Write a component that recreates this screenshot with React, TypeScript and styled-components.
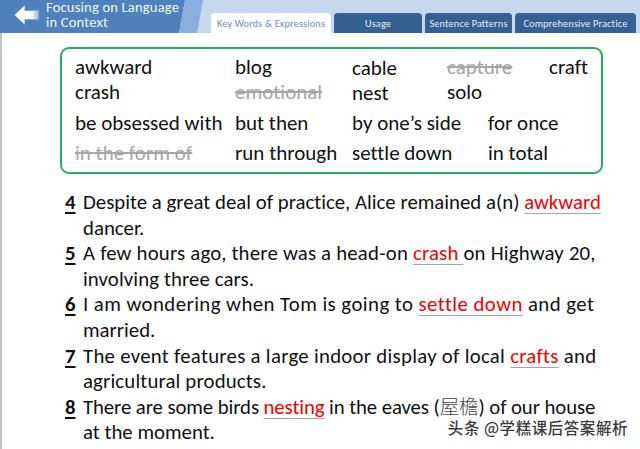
import React from 'react';
import styled, { createGlobalStyle } from 'styled-components';

const GlobalStyle = createGlobalStyle`
  html, body {
    margin: 0;
    padding: 0;
    background: #fff;
  }
`;

const Page = styled.div`
  position: relative;
  width: 640px;
  height: 449px;
  overflow: hidden;
  background: #fff;
  font-family: Carlito, Lato, "Liberation Sans", "Noto Sans CJK SC", sans-serif;
  font-variant-ligatures: none;
  color: #111;
`;

const Header = styled.header`
  display: flex;
  height: 33px;
  background: #c6d8f0;
`;

const TitleBlock = styled.div`
  display: flex;
  align-items: center;
  gap: 7px;
  width: 185px;
  padding: 0 0 4px 14px;
  box-sizing: border-box;
  background: #4f81bd;
  clip-path: polygon(0 0, 100% 0, 179px 100%, 0 100%);
`;

const Title = styled.div`
  color: #f2f6fb;
  font-size: 14.5px;
  line-height: 14.5px;
  letter-spacing: 0.2px;
  white-space: nowrap;
`;

const Stripe = styled.div`
  width: 24px;
  margin-left: -6px;
  background: #8aaede;
  clip-path: polygon(6px 0, 100% 0, 18px 100%, 0 100%);
`;

const Tabs = styled.nav`
  display: flex;
  align-items: flex-end;
  gap: 3px;
  margin-left: 8px;
`;

const Tab = styled.div<{ $width: number; $active?: boolean }>`
  display: flex;
  align-items: center;
  justify-content: center;
  width: ${({ $width }) => $width}px;
  height: 20px;
  border-radius: 4px 4px 0 0;
  font-size: 10.3px;
  letter-spacing: 0.15px;
  white-space: nowrap;
  background: ${({ $active }) => ($active ? '#fff' : '#366092')};
  color: ${({ $active }) => ($active ? '#6d88bd' : '#e6edf6')};
`;

const Body = styled.main`
  height: 416px;
  box-sizing: border-box;
  padding: 14px 0 0 60px;
  border-left: 2px solid #c4c4c4;
`;

const WordBox = styled.section`
  width: 543px;
  height: 127px;
  margin-left: -2px;
  box-sizing: border-box;
  padding: 6px 0 0 13px;
  border: 2px solid #22b05c;
  border-radius: 9px;
`;

const WordRow = styled.div<{ $height: number }>`
  display: flex;
  height: ${({ $height }) => $height}px;
  font-size: 21px;
  line-height: 25px;
  white-space: nowrap;
`;

const Word = styled.span<{ $width?: number; $struck?: boolean; $drop?: number }>`
  display: block;
  width: ${({ $width }) => ($width ? `${$width}px` : 'auto')};
  padding-top: ${({ $drop }) => $drop ?? 0}px;
  color: ${({ $struck }) => ($struck ? '#a6a6a6' : '#111')};
  text-decoration: ${({ $struck }) => ($struck ? 'line-through' : 'none')};
`;

const Questions = styled.ol`
  list-style: none;
  margin: 16px 0 0 3px;
  padding: 0;
  font-size: 20.8px;
  line-height: 25.6px;
  white-space: nowrap;
`;

const Question = styled.li`
  display: flex;
`;

const QuestionNumber = styled.span`
  width: 18px;
  flex: none;
  font-weight: 700;
  text-decoration: underline;
  text-underline-offset: 3px;
`;

const QuestionLine = styled.span<{ $tracking?: number }>`
  display: block;
  letter-spacing: ${({ $tracking }) => $tracking ?? 0}px;
`;

const Answer = styled.span`
  color: #f00000;
  text-decoration: underline;
  text-decoration-color: #a6a6a6;
  text-decoration-thickness: 1px;
  text-underline-offset: 4px;
`;

const Gloss = styled.span`
  font-family: "Noto Sans CJK SC", sans-serif;
  font-weight: 300;
  line-height: 0;
  color: #444;
  font-size: 19.5px;
`;

const Watermark = styled.div`
  position: absolute;
  right: 12px;
  bottom: 12px;
  font-family: "Noto Sans CJK SC", sans-serif;
  font-size: 15.5px;
  font-weight: 500;
  line-height: 20px;
  letter-spacing: 0.55px;
  color: #3c3c3c;
  text-shadow: 0 0 2px #fff, 0 0 2px #fff;
`;

const BackArrow = () => (
  <svg width="25" height="20" viewBox="0 0 25 21" aria-hidden="true">
    <path d="M0 10.5 L10.5 0.5 V6 H25 V15 H10.5 V20.5 Z" fill="#fff" />
    <rect x="19" y="6" width="2" height="9" fill="#dbe5f3" />
    <rect x="21" y="6" width="2" height="9" fill="#bccfe8" />
    <rect x="23" y="6" width="2" height="9" fill="#9db8dc" />
  </svg>
);

const App = () => (
  <Page>
    <GlobalStyle />
    <Header>
      <TitleBlock>
        <BackArrow />
        <Title>
          Focusing on Language
          <br />
          in Context
        </Title>
      </TitleBlock>
      <Stripe />
      <Tabs>
        <Tab $width={120} $active>Key Words &amp; Expressions</Tab>
        <Tab $width={88}>Usage</Tab>
        <Tab $width={87}>Sentence Patterns</Tab>
        <Tab $width={121}>Comprehensive Practice</Tab>
      </Tabs>
    </Header>
    <Body>
      <WordBox>
        <WordRow $height={25}>
          <Word $width={160}>awkward</Word>
          <Word $width={117}>blog</Word>
          <Word $width={95} $drop={1}>cable</Word>
          <Word $width={102} $struck>capture</Word>
          <Word>craft</Word>
        </WordRow>
        <WordRow $height={31}>
          <Word $width={160}>crash</Word>
          <Word $width={117} $struck>emotional</Word>
          <Word $width={95} $drop={1}>nest</Word>
          <Word>solo</Word>
        </WordRow>
        <WordRow $height={30}>
          <Word $width={160}>be obsessed with</Word>
          <Word $width={117}>but then</Word>
          <Word $width={136}>by one’s side</Word>
          <Word>for once</Word>
        </WordRow>
        <WordRow $height={30}>
          <Word $width={160} $struck>in the form of</Word>
          <Word $width={117}>run through</Word>
          <Word $width={136}>settle down</Word>
          <Word>in total</Word>
        </WordRow>
      </WordBox>
      <Questions>
        <Question>
          <QuestionNumber>4</QuestionNumber>
          <div>
            <QuestionLine>
              Despite a great deal of practice, Alice remained a(n) <Answer>awkward</Answer>
            </QuestionLine>
            <QuestionLine>dancer.</QuestionLine>
          </div>
        </Question>
        <Question>
          <QuestionNumber>5</QuestionNumber>
          <div>
            <QuestionLine $tracking={0.2}>
              A few hours ago, there was a head-on <Answer>crash </Answer>on Highway 20,
            </QuestionLine>
            <QuestionLine $tracking={0.1}>involving three cars.</QuestionLine>
          </div>
        </Question>
        <Question>
          <QuestionNumber>6</QuestionNumber>
          <div>
            <QuestionLine $tracking={0.44}>
              I am wondering when Tom is going to <Answer>settle down</Answer> and get
            </QuestionLine>
            <QuestionLine>married.</QuestionLine>
          </div>
        </Question>
        <Question>
          <QuestionNumber>7</QuestionNumber>
          <div>
            <QuestionLine $tracking={0.28}>
              The event features a large indoor display of local <Answer>crafts</Answer> and
            </QuestionLine>
            <QuestionLine $tracking={0.15}>agricultural products.</QuestionLine>
          </div>
        </Question>
        <Question>
          <QuestionNumber>8</QuestionNumber>
          <div>
            <QuestionLine $tracking={-0.1}>
              There are some birds <Answer>nesting</Answer> in the eaves (<Gloss>屋檐</Gloss>) of our house
            </QuestionLine>
            <QuestionLine>at the moment.</QuestionLine>
          </div>
        </Question>
      </Questions>
    </Body>
    <Watermark>头条 @学糕课后答案解析</Watermark>
  </Page>
);

export default App;
